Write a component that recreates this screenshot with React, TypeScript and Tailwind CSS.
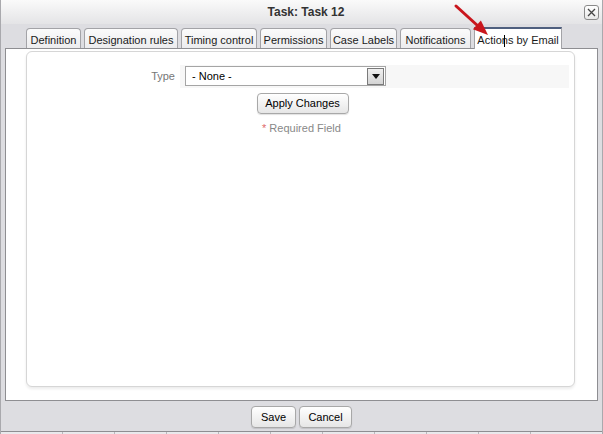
import React from "react";

const tabs = [
  { label: "Definition", w: "w-[55px]" },
  { label: "Designation rules", w: "w-[94px]" },
  { label: "Timing control", w: "w-[76px]" },
  { label: "Permissions", w: "w-[67px]" },
  { label: "Case Labels", w: "w-[67px]" },
  { label: "Notifications", w: "w-[71px]" },
];

function Btn({ children, className = "" }: { children: React.ReactNode; className?: string }) {
  return (
    <button
      className={`flex items-center justify-center rounded-[4px] border border-[#a8a8a8] bg-gradient-to-b from-[#ffffff] to-[#e6e6e6] text-[11px] text-black shadow-[0_1px_1px_rgba(0,0,0,0.12)] ${className}`}
    >
      {children}
    </button>
  );
}

export default function App() {
  return (
    <div className="relative flex h-[434px] w-[603px] flex-col overflow-hidden border-x border-[#a9a9ad] bg-[#dddde1] font-['Liberation_Sans',Arial,sans-serif] text-[11px] text-[#222]">
      {/* title bar */}
      <div className="relative flex h-[24px] items-center justify-center bg-gradient-to-b from-[#fafafa] to-[#e4e4e6]">
        <span className="pl-[9px] text-[12px] font-bold text-[#333]">Task: Task 12</span>
        <button className="absolute right-[3px] top-[5px] flex h-[15px] w-[15px] items-center justify-center rounded-[3px] border border-[#8a8a8a] bg-gradient-to-b from-white to-[#e8e8e8]">
          <svg width="9" height="9" viewBox="0 0 9 9">
            <path d="M1 1 L8 8 M8 1 L1 8" stroke="#444" strokeWidth="1.3" />
          </svg>
        </button>
      </div>

      {/* tabs */}
      <div className="relative z-10 flex h-[24px] items-end gap-[3px] pl-[25px]">
        {tabs.map((t) => (
          <div
            key={t.label}
            className={`flex h-[20px] ${t.w} items-center justify-center rounded-t-[4px] border border-b-0 border-[#a3a3a7] bg-gradient-to-b from-[#fbfbfb] to-[#ececee] pt-[3px] text-[11px] text-[#1a1a1a]`}
          >
            {t.label}
          </div>
        ))}
        <div className="relative -mb-px flex h-[22px] w-[88px] items-center justify-center border-x border-t-2 border-x-[#a3a3a7] border-t-[#4f5f7e] bg-white pt-[3px] text-[11px] text-[#1a1a1a]">
          Actions by Email
          <span className="absolute left-[29px] top-[6px] h-[12px] w-px bg-black" />
        </div>
      </div>

      {/* content panel */}
      <div className="mx-[4px] flex h-[354px] flex-col border border-[#8e8e92] bg-white">
        <div className="mb-[13px] ml-[20px] mr-[22px] mt-[2px] flex flex-1 flex-col rounded-[6px] border border-[#d6d6d6] bg-white shadow-[0_2px_3px_rgba(0,0,0,0.08)]">
          <div className="mt-[13px] flex h-[23px] items-center">
            <div className="w-[153px] pr-[5px] text-right text-[11px] text-[#777]">Type</div>
            <div className="mr-[5px] flex h-[23px] flex-1 items-center bg-[#f7f7f7] pl-[5px]">
              <div className="flex h-[20px] w-[201px] items-center justify-between border border-[#a5a5a5] bg-white pl-[6px] pr-px">
                <span className="text-[11px] text-black">- None -</span>
                <span className="flex h-[17px] w-[17px] items-center justify-center border border-[#7a7a7a] bg-gradient-to-b from-[#f0f0f0] to-[#d4d4d4]">
                  <svg width="8" height="5" viewBox="0 0 8 5">
                    <path d="M0 0 H8 L4 5 Z" fill="#111" />
                  </svg>
                </span>
              </div>
            </div>
          </div>
          <div className="mt-[5px] flex justify-center pl-[4px]">
            <Btn className="h-[21px] w-[92px]">Apply Changes</Btn>
          </div>
          <div className="mt-[6px] flex justify-center pl-[2px] text-[11px] text-[#888]">
            <span className="mr-[3px] text-[#e06a6a]">*</span>Required Field
          </div>
        </div>
      </div>

      {/* footer buttons */}
      <div className="flex h-[30px] items-center justify-center gap-[3px] pt-[2px]">
        <Btn className="h-[22px] w-[45px]">Save</Btn>
        <Btn className="h-[22px] w-[53px]">Cancel</Btn>
      </div>

      {/* page behind */}
      <div className="flex h-[3px] border-t border-[#8e8e92] bg-[#e9e9ec]">
        {[62, 106, 158, 210, 262, 314, 366, 418, 470, 522].map((x) => (
          <span key={x} className="h-full w-px shrink-0 bg-[#b8b8bc]" style={{ marginLeft: x === 62 ? 61 : 51 }} />
        ))}
      </div>

      {/* red arrow annotation */}
      <svg className="pointer-events-none absolute left-0 top-0 z-20" width="603" height="60">
        <line x1="455" y1="6" x2="477" y2="26" stroke="#c9161d" strokeWidth="3" strokeLinecap="round" />
        <polygon points="487,35 471.9,29.3 479.9,20.5" fill="#c9161d" />
      </svg>
    </div>
  );
}
